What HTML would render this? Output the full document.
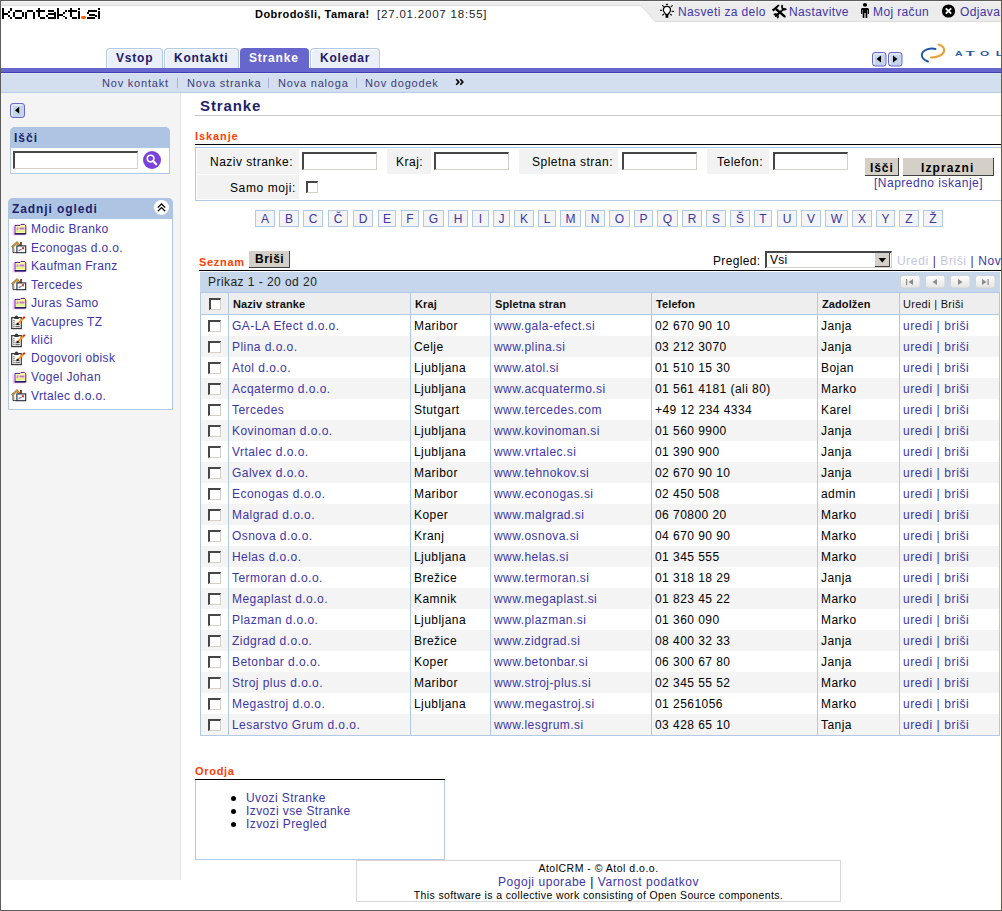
<!DOCTYPE html>
<html><head><meta charset="utf-8"><title>Stranke</title>
<style>
html,body{margin:0;padding:0;background:#fff;}
body{width:1002px;height:911px;position:relative;overflow:hidden;font-family:"Liberation Sans", sans-serif;}
.t{position:absolute;line-height:20px;white-space:nowrap;font-family:"Liberation Sans", sans-serif;}
svg{overflow:visible}
</style></head><body>
<div style="position:absolute;left:0px;top:0px;width:1002px;height:1px;background:#5c5c5c"></div>
<div style="position:absolute;left:1px;top:1px;width:1000px;height:1px;background:#f6f6f6"></div>
<div style="position:absolute;left:1px;top:2px;width:1000px;height:3px;background:#ececec"></div>
<div style="position:absolute;left:1px;top:5px;width:1000px;height:1px;background:#dcdcdc"></div>
<svg style="position:absolute;left:0;top:0" width="1002" height="30"><polygon points="641,5 1001,5 1001,21 655,21" fill="#ececec"/><polyline points="641,5.5 655,21.5 1001,21.5" fill="none" stroke="#dcdcdc" stroke-width="1"/></svg>
<svg style="position:absolute;left:0;top:0" width="110" height="25"><rect x="2" y="8" width="2" height="11" fill="#000"/><rect x="10" y="8" width="2" height="3" fill="#000"/><rect x="8" y="11" width="2" height="2" fill="#000"/><rect x="4" y="13" width="4" height="2" fill="#000"/><rect x="8" y="15" width="2" height="2" fill="#000"/><rect x="10" y="17" width="2" height="2" fill="#000"/><rect x="15" y="10" width="7" height="2" fill="#000"/><rect x="13" y="12" width="2" height="5" fill="#000"/><rect x="22" y="12" width="2" height="5" fill="#000"/><rect x="15" y="17" width="7" height="2" fill="#000"/><rect x="25" y="12" width="2" height="7" fill="#000"/><rect x="27" y="10" width="6" height="2" fill="#000"/><rect x="33" y="12" width="2" height="7" fill="#000"/><rect x="38" y="8" width="2" height="9" fill="#000"/><rect x="36" y="10" width="9" height="2" fill="#000"/><rect x="40" y="17" width="5" height="2" fill="#000"/><rect x="48" y="10" width="6" height="2" fill="#000"/><rect x="54" y="12" width="2" height="7" fill="#000"/><rect x="48" y="13" width="6" height="2" fill="#000"/><rect x="46" y="15" width="2" height="2" fill="#000"/><rect x="48" y="17" width="8" height="2" fill="#000"/><rect x="57" y="8" width="2" height="11" fill="#000"/><rect x="65" y="10" width="2" height="2" fill="#000"/><rect x="63" y="12" width="2" height="2" fill="#000"/><rect x="59" y="14" width="4" height="2" fill="#000"/><rect x="63" y="16" width="2" height="1" fill="#000"/><rect x="65" y="17" width="2" height="2" fill="#000"/><rect x="70" y="8" width="2" height="9" fill="#000"/><rect x="68" y="10" width="9" height="2" fill="#000"/><rect x="72" y="17" width="5" height="2" fill="#000"/><rect x="78" y="8" width="2" height="2" fill="#000"/><rect x="78" y="11" width="2" height="8" fill="#000"/><rect x="88" y="10" width="9" height="2" fill="#000"/><rect x="87" y="12" width="2" height="2" fill="#000"/><rect x="89" y="14" width="6" height="2" fill="#000"/><rect x="95" y="15" width="2" height="2" fill="#000"/><rect x="87" y="17" width="8" height="2" fill="#000"/><rect x="98" y="8" width="2" height="2" fill="#000"/><rect x="98" y="11" width="2" height="8" fill="#000"/><polygon points="82,16 85,16 86,17 86,18 85,19 82,19 81,18 81,17" fill="#ff6010"/></svg>
<div class="t" style="left:255px;top:4px;font-size:11px;font-weight:bold;color:#000;letter-spacing:0.45px;">Dobrodošli, Tamara!</div>
<div class="t" style="left:377px;top:4px;font-size:11.5px;font-weight:normal;color:#222;letter-spacing:0.8px;">[27.01.2007 18:55]</div>
<svg style="position:absolute;left:655px;top:2px" width="22" height="20" viewBox="0 0 22 20">
<g stroke="#000" stroke-width="1.1" stroke-linecap="butt">
<line x1="10.9" y1="2.4" x2="13" y2="2.4"/><line x1="7.2" y1="3.3" x2="8.8" y2="4.6"/><line x1="17.6" y1="3.4" x2="16" y2="4.7"/>
<line x1="5" y1="8.3" x2="7.2" y2="8.3"/><line x1="16.6" y1="9.4" x2="18.9" y2="9.4"/><line x1="7.3" y1="13.4" x2="8.9" y2="12"/><line x1="16.8" y1="13.4" x2="15.2" y2="12"/>
</g>
<path d="M11.9,4.3 C9.7,4.3 8.4,6 8.4,8 C8.4,9.8 10,11 10.7,12.3 L13.2,12.3 C13.9,11 15.5,9.8 15.5,8 C15.5,6 14.1,4.3 11.9,4.3 Z" fill="#fff" stroke="#000" stroke-width="1.25"/>
<rect x="10.6" y="12.2" width="2.7" height="3.6" fill="#000"/>
</svg>
<div class="t" style="left:678px;top:2px;font-size:12px;font-weight:normal;color:#3d35a8;letter-spacing:0.38px;">Nasveti za delo</div>
<svg style="position:absolute;left:765px;top:2px" width="35" height="20" viewBox="0 0 35 20">
<polygon points="7,7.8 13.2,2.6 14.6,3.6 9.6,8.6" fill="#000"/>
<polygon points="7,7.8 8.2,6.8 9.6,8.6 8.4,9.4" fill="#000"/>
<line x1="11.5" y1="7.5" x2="19.6" y2="14.4" stroke="#000" stroke-width="2.3" stroke-linecap="round"/>
<line x1="19" y1="6.8" x2="10.8" y2="14" stroke="#000" stroke-width="2" stroke-linecap="round"/>
<path d="M17.6,3.2 A2.3,2.3 0 1 0 21.3,6.6" fill="none" stroke="#000" stroke-width="1.7"/>
<path d="M12.3,16.2 A2.3,2.3 0 1 0 8.9,12.8" fill="none" stroke="#000" stroke-width="1.7"/>
</svg>
<div class="t" style="left:789px;top:2px;font-size:12px;font-weight:normal;color:#3d35a8;letter-spacing:0.38px;">Nastavitve</div>
<svg style="position:absolute;left:859px;top:2px" width="12" height="17" viewBox="0 0 12 17">
<ellipse cx="6" cy="2.9" rx="2.1" ry="1.8" fill="#000"/>
<path d="M3.3,6 L8.7,6 Q10,6 10,7.5 L10,12 L8.8,12 L8.8,8 L8.3,8 L8.3,16 L6.6,16 L6.6,11 L5.4,11 L5.4,16 L3.7,16 L3.7,8 L3.2,8 L3.2,12 L2,12 L2,7.5 Q2,6 3.3,6 Z" fill="#000"/>
</svg>
<div class="t" style="left:873px;top:2px;font-size:12px;font-weight:normal;color:#3d35a8;letter-spacing:0.38px;">Moj račun</div>
<svg style="position:absolute;left:941px;top:4px" width="15" height="15" viewBox="0 0 15 15">
<circle cx="7.5" cy="7" r="6.6" fill="#000"/>
<path d="M4.8,4.3 L10.2,9.7 M10.2,4.3 L4.8,9.7" stroke="#fff" stroke-width="1.8"/>
</svg>
<div class="t" style="left:960px;top:2px;font-size:12px;font-weight:normal;color:#3d35a8;letter-spacing:0.38px;">Odjava</div>
<div style="position:absolute;left:106px;top:48px;width:55px;height:19px;background:#eaeff8;border:1px solid #b2c9e6;border-bottom:none;border-radius:4px 4px 0 0;box-shadow:inset 1px 1px 0 #fff"></div>
<div class="t" style="left:116px;top:48px;font-size:12px;font-weight:bold;color:#1e1a6a;letter-spacing:0.8px;">Vstop</div>
<div style="position:absolute;left:164px;top:48px;width:73px;height:19px;background:#eaeff8;border:1px solid #b2c9e6;border-bottom:none;border-radius:4px 4px 0 0;box-shadow:inset 1px 1px 0 #fff"></div>
<div class="t" style="left:174px;top:48px;font-size:12px;font-weight:bold;color:#1e1a6a;letter-spacing:0.8px;">Kontakti</div>
<div style="position:absolute;left:240px;top:48px;width:69px;height:20px;background:#6666cc;border-radius:4px 4px 0 0"></div>
<div class="t" style="left:249px;top:48px;font-size:12px;font-weight:bold;color:#fff;letter-spacing:0.8px;">Stranke</div>
<div style="position:absolute;left:310px;top:48px;width:68px;height:19px;background:#eaeff8;border:1px solid #b2c9e6;border-bottom:none;border-radius:4px 4px 0 0;box-shadow:inset 1px 1px 0 #fff"></div>
<div class="t" style="left:320px;top:48px;font-size:12px;font-weight:bold;color:#1e1a6a;letter-spacing:0.8px;">Koledar</div>
<div style="position:absolute;left:1px;top:68px;width:1000px;height:4px;background:#6666cc"></div>
<div style="position:absolute;left:1px;top:72px;width:1000px;height:1px;background:#3d3db8"></div>
<div style="position:absolute;left:1px;top:73px;width:1000px;height:1px;background:#dde6f1"></div>
<div style="position:absolute;left:1px;top:74px;width:1000px;height:18px;background:#d3dfee"></div>
<div style="position:absolute;left:1px;top:92px;width:1000px;height:1px;background:#b9cde6"></div>
<svg style="position:absolute;left:872px;top:52px" width="15" height="15" viewBox="0 0 15 15"><rect x="0.5" y="0.5" width="13.5" height="13.5" rx="2.5" fill="#c4d4ea" stroke="#6a66d0"/><path d="M2,12 L2,3.5 Q2,2 3.5,2 L12,2" fill="none" stroke="#fff" stroke-width="1"/><path d="M9,3.5 L9,10.5 L4.5,7 Z" fill="#000"/></svg>
<svg style="position:absolute;left:888px;top:52px" width="15" height="15" viewBox="0 0 15 15"><rect x="0.5" y="0.5" width="13.5" height="13.5" rx="2.5" fill="#c4d4ea" stroke="#6a66d0"/><path d="M2,12 L2,3.5 Q2,2 3.5,2 L12,2" fill="none" stroke="#fff" stroke-width="1"/><path d="M5,3.5 L5,10.5 L9.5,7 Z" fill="#000"/></svg>
<svg style="position:absolute;left:918px;top:40px" width="84" height="26" viewBox="0 0 84 26">
<path d="M17.5,9 C13,7.5 4,9.5 3.8,15 C3.8,18 7,20.5 10,21.5" fill="none" stroke="#1f55a3" stroke-width="1.9" stroke-linecap="round"/>
<path d="M20.5,4.5 C24,5.5 26.5,8 26,11 C25.5,15 19,17.5 13,17.5" fill="none" stroke="#e6a23a" stroke-width="2.1" stroke-linecap="round"/>
<g fill="#2c5aa5" font-family="Liberation Sans" font-size="7.8" font-weight="bold"><text x="37" y="16.2" textLength="7.6" lengthAdjust="spacingAndGlyphs">A</text><text x="47.5" y="16.2" textLength="9.4" lengthAdjust="spacingAndGlyphs">T</text><text x="62" y="16.2" textLength="9.2" lengthAdjust="spacingAndGlyphs">O</text><text x="77.7" y="16.2" textLength="7.5" lengthAdjust="spacingAndGlyphs">L</text></g>
</svg>
<div class="t" style="left:102px;top:73px;font-size:11px;font-weight:normal;color:#3b3b7a;letter-spacing:0.8px;">Nov kontakt</div>
<div class="t" style="left:187px;top:73px;font-size:11px;font-weight:normal;color:#3b3b7a;letter-spacing:0.8px;">Nova stranka</div>
<div class="t" style="left:278px;top:73px;font-size:11px;font-weight:normal;color:#3b3b7a;letter-spacing:0.8px;">Nova naloga</div>
<div class="t" style="left:365px;top:73px;font-size:11px;font-weight:normal;color:#3b3b7a;letter-spacing:0.8px;">Nov dogodek</div>
<div style="position:absolute;left:177px;top:78px;width:1px;height:10px;background:#a8acdf"></div>
<div style="position:absolute;left:268px;top:78px;width:1px;height:10px;background:#a8acdf"></div>
<div style="position:absolute;left:356px;top:78px;width:1px;height:10px;background:#a8acdf"></div>
<svg style="position:absolute;left:450px;top:74px" width="20" height="16"><path d="M6.3,5.2 L8.8,8 L6.3,10.8 M10.3,5.2 L12.8,8 L10.3,10.8" fill="none" stroke="#000" stroke-width="1.7"/></svg>
<div style="position:absolute;left:1px;top:93px;width:179px;height:787px;background:#f4f4f4"></div>
<div style="position:absolute;left:180px;top:93px;width:1px;height:787px;background:#e2e2e2"></div>
<svg style="position:absolute;left:10px;top:103px" width="16" height="16" viewBox="0 0 16 16"><rect x="0.5" y="0.5" width="14" height="14" rx="2.5" fill="#c4d4ea" stroke="#6a66d0"/><path d="M2,12.5 L2,3.5 Q2,2 3.5,2 L12.5,2" fill="none" stroke="#fff" stroke-width="1"/><path d="M9.2,3.8 L9.2,10.8 L5,7.3 Z" fill="#000"/></svg>
<div style="position:absolute;left:10px;top:127px;width:160px;height:47px;background:#fff;border:1px solid #b2c9e6;border-radius:5px 5px 0 0;box-sizing:border-box"></div>
<div style="position:absolute;left:10px;top:127px;width:160px;height:21px;background:#adc5e3;border-radius:5px 5px 0 0"></div>
<div class="t" style="left:14px;top:128px;font-size:12px;font-weight:bold;color:#1f1f6b;letter-spacing:1.0px;">Išči</div>
<div style="position:absolute;left:13px;top:151px;width:125px;height:18px;background:#fff;border-top:2px solid #464646;border-left:2px solid #464646;border-right:1px solid #d4d0c8;border-bottom:1px solid #d4d0c8;box-sizing:border-box"></div>
<svg style="position:absolute;left:142px;top:150px" width="20" height="20" viewBox="0 0 20 20"><circle cx="10" cy="10" r="9" fill="#7a42dc"/><circle cx="8.6" cy="8.6" r="3.3" fill="none" stroke="#fff" stroke-width="1.6"/><line x1="11" y1="11" x2="14.2" y2="14.2" stroke="#fff" stroke-width="2.2" stroke-linecap="round"/></svg>
<div style="position:absolute;left:8px;top:198px;width:165px;height:212px;background:#fff;border:1px solid #b2c9e6;border-radius:5px 5px 0 0;box-sizing:border-box"></div>
<div style="position:absolute;left:8px;top:198px;width:165px;height:21px;background:#adc5e3;border-radius:5px 5px 0 0"></div>
<div class="t" style="left:12px;top:199px;font-size:12px;font-weight:bold;color:#1f1f6b;letter-spacing:0.9px;">Zadnji ogledi</div>
<svg style="position:absolute;left:153px;top:199px" width="17" height="17" viewBox="0 0 17 17"><circle cx="8.5" cy="8.5" r="7.5" fill="#fff"/><path d="M4.8,8.6 L8.5,5 L12.2,8.6 M4.8,12.2 L8.5,8.6 L12.2,12.2" fill="none" stroke="#000" stroke-width="1.3"/></svg>
<svg style="position:absolute;left:11px;top:223px" width="16" height="13" viewBox="0 0 16 13"><rect x="1.5" y="3.5" width="12" height="9" fill="#f9c9f0"/><path d="M4,2.4 L9,2.4 L10,1.4 L13.5,1.4 L14.8,2.6 L14.8,10.8 L4,10.8 Z" fill="#ffff9a" stroke="#5a10a0" stroke-width="1"/><rect x="3.5" y="10.2" width="11.6" height="1.3" fill="#101060"/><rect x="5.5" y="4" width="2" height="1.3" fill="#9cd"/><rect x="5.5" y="5.5" width="2" height="1.2" fill="#d050c0"/><rect x="8.5" y="4.5" width="5" height="2" fill="#c070e0"/><rect x="5" y="7.5" width="8.5" height="1.2" fill="#c8f090"/><rect x="3.2" y="3" width="1" height="7.5" fill="#c090f0"/></svg>
<div class="t" style="left:31px;top:219px;font-size:12px;font-weight:normal;color:#3d35a8;letter-spacing:0.35px;">Modic Branko</div>
<svg style="position:absolute;left:11px;top:241px" width="16" height="13" viewBox="0 0 16 13"><rect x="9.2" y="1" width="1.6" height="3.8" fill="#6a1a10"/><path d="M1,6.3 L6,1.6 L8.8,4.6" fill="none" stroke="#3a3a3a" stroke-width="2"/><path d="M1,6.3 L6,1.6 L8.8,4.6" fill="none" stroke="#f0b020" stroke-width="1.1"/><path d="M2,6.3 L2,11.6 L6,11.6" fill="none" stroke="#2a3040" stroke-width="1"/><rect x="3.3" y="7.5" width="0.8" height="3.8" fill="#d8c8a0"/><rect x="5.9" y="4.9" width="8.8" height="6.8" fill="#f4f8ff" stroke="#1f2838" stroke-width="1.1"/><rect x="11" y="6.2" width="2" height="2" fill="#e83010"/><path d="M7.6,9.6 L10.6,8.3" stroke="#7080a0" stroke-width="1.2"/></svg>
<div class="t" style="left:31px;top:238px;font-size:12px;font-weight:normal;color:#3d35a8;letter-spacing:0.35px;">Econogas d.o.o.</div>
<svg style="position:absolute;left:11px;top:260px" width="16" height="13" viewBox="0 0 16 13"><rect x="1.5" y="3.5" width="12" height="9" fill="#f9c9f0"/><path d="M4,2.4 L9,2.4 L10,1.4 L13.5,1.4 L14.8,2.6 L14.8,10.8 L4,10.8 Z" fill="#ffff9a" stroke="#5a10a0" stroke-width="1"/><rect x="3.5" y="10.2" width="11.6" height="1.3" fill="#101060"/><rect x="5.5" y="4" width="2" height="1.3" fill="#9cd"/><rect x="5.5" y="5.5" width="2" height="1.2" fill="#d050c0"/><rect x="8.5" y="4.5" width="5" height="2" fill="#c070e0"/><rect x="5" y="7.5" width="8.5" height="1.2" fill="#c8f090"/><rect x="3.2" y="3" width="1" height="7.5" fill="#c090f0"/></svg>
<div class="t" style="left:31px;top:256px;font-size:12px;font-weight:normal;color:#3d35a8;letter-spacing:0.35px;">Kaufman Franz</div>
<svg style="position:absolute;left:11px;top:278px" width="16" height="13" viewBox="0 0 16 13"><rect x="9.2" y="1" width="1.6" height="3.8" fill="#6a1a10"/><path d="M1,6.3 L6,1.6 L8.8,4.6" fill="none" stroke="#3a3a3a" stroke-width="2"/><path d="M1,6.3 L6,1.6 L8.8,4.6" fill="none" stroke="#f0b020" stroke-width="1.1"/><path d="M2,6.3 L2,11.6 L6,11.6" fill="none" stroke="#2a3040" stroke-width="1"/><rect x="3.3" y="7.5" width="0.8" height="3.8" fill="#d8c8a0"/><rect x="5.9" y="4.9" width="8.8" height="6.8" fill="#f4f8ff" stroke="#1f2838" stroke-width="1.1"/><rect x="11" y="6.2" width="2" height="2" fill="#e83010"/><path d="M7.6,9.6 L10.6,8.3" stroke="#7080a0" stroke-width="1.2"/></svg>
<div class="t" style="left:31px;top:275px;font-size:12px;font-weight:normal;color:#3d35a8;letter-spacing:0.35px;">Tercedes</div>
<svg style="position:absolute;left:11px;top:297px" width="16" height="13" viewBox="0 0 16 13"><rect x="1.5" y="3.5" width="12" height="9" fill="#f9c9f0"/><path d="M4,2.4 L9,2.4 L10,1.4 L13.5,1.4 L14.8,2.6 L14.8,10.8 L4,10.8 Z" fill="#ffff9a" stroke="#5a10a0" stroke-width="1"/><rect x="3.5" y="10.2" width="11.6" height="1.3" fill="#101060"/><rect x="5.5" y="4" width="2" height="1.3" fill="#9cd"/><rect x="5.5" y="5.5" width="2" height="1.2" fill="#d050c0"/><rect x="8.5" y="4.5" width="5" height="2" fill="#c070e0"/><rect x="5" y="7.5" width="8.5" height="1.2" fill="#c8f090"/><rect x="3.2" y="3" width="1" height="7.5" fill="#c090f0"/></svg>
<div class="t" style="left:31px;top:293px;font-size:12px;font-weight:normal;color:#3d35a8;letter-spacing:0.35px;">Juras Samo</div>
<svg style="position:absolute;left:10px;top:314px" width="16" height="16" viewBox="0 0 16 16"><rect x="1.7" y="3.6" width="9.6" height="11" fill="#fff" stroke="#383838" stroke-width="1.2"/><path d="M4.2,5 C4.4,2.6 5.4,1.4 6.5,1.4 C7.6,1.4 8.6,2.6 8.8,5 Z" fill="#383838"/><g fill="#383838"><rect x="3.4" y="6.2" width="1.1" height="1.1"/><rect x="3.4" y="8.2" width="1.1" height="1.1"/><rect x="3.4" y="10.2" width="1.1" height="1.1"/><rect x="5.4" y="10.3" width="4.4" height="0.9"/><rect x="3.4" y="12.2" width="1.1" height="1.1"/><rect x="5.4" y="12.3" width="4.4" height="0.9"/></g><line x1="8" y1="9.6" x2="13.6" y2="4" stroke="#ff8c14" stroke-width="1.9"/><line x1="13.2" y1="4.4" x2="14.8" y2="2.8" stroke="#d42a10" stroke-width="2"/><circle cx="7.6" cy="9.9" r="1.1" fill="#000"/></svg>
<div class="t" style="left:31px;top:312px;font-size:12px;font-weight:normal;color:#3d35a8;letter-spacing:0.35px;">Vacupres TZ</div>
<svg style="position:absolute;left:10px;top:332px" width="16" height="16" viewBox="0 0 16 16"><rect x="1.7" y="3.6" width="9.6" height="11" fill="#fff" stroke="#383838" stroke-width="1.2"/><path d="M4.2,5 C4.4,2.6 5.4,1.4 6.5,1.4 C7.6,1.4 8.6,2.6 8.8,5 Z" fill="#383838"/><g fill="#383838"><rect x="3.4" y="6.2" width="1.1" height="1.1"/><rect x="3.4" y="8.2" width="1.1" height="1.1"/><rect x="3.4" y="10.2" width="1.1" height="1.1"/><rect x="5.4" y="10.3" width="4.4" height="0.9"/><rect x="3.4" y="12.2" width="1.1" height="1.1"/><rect x="5.4" y="12.3" width="4.4" height="0.9"/></g><line x1="8" y1="9.6" x2="13.6" y2="4" stroke="#ff8c14" stroke-width="1.9"/><line x1="13.2" y1="4.4" x2="14.8" y2="2.8" stroke="#d42a10" stroke-width="2"/><circle cx="7.6" cy="9.9" r="1.1" fill="#000"/></svg>
<div class="t" style="left:31px;top:330px;font-size:12px;font-weight:normal;color:#3d35a8;letter-spacing:0.35px;">kliči</div>
<svg style="position:absolute;left:10px;top:350px" width="16" height="16" viewBox="0 0 16 16"><rect x="1.7" y="3.6" width="9.6" height="11" fill="#fff" stroke="#383838" stroke-width="1.2"/><path d="M4.2,5 C4.4,2.6 5.4,1.4 6.5,1.4 C7.6,1.4 8.6,2.6 8.8,5 Z" fill="#383838"/><g fill="#383838"><rect x="3.4" y="6.2" width="1.1" height="1.1"/><rect x="3.4" y="8.2" width="1.1" height="1.1"/><rect x="3.4" y="10.2" width="1.1" height="1.1"/><rect x="5.4" y="10.3" width="4.4" height="0.9"/><rect x="3.4" y="12.2" width="1.1" height="1.1"/><rect x="5.4" y="12.3" width="4.4" height="0.9"/></g><line x1="8" y1="9.6" x2="13.6" y2="4" stroke="#ff8c14" stroke-width="1.9"/><line x1="13.2" y1="4.4" x2="14.8" y2="2.8" stroke="#d42a10" stroke-width="2"/><circle cx="7.6" cy="9.9" r="1.1" fill="#000"/></svg>
<div class="t" style="left:31px;top:348px;font-size:12px;font-weight:normal;color:#3d35a8;letter-spacing:0.35px;">Dogovori obisk</div>
<svg style="position:absolute;left:11px;top:371px" width="16" height="13" viewBox="0 0 16 13"><rect x="1.5" y="3.5" width="12" height="9" fill="#f9c9f0"/><path d="M4,2.4 L9,2.4 L10,1.4 L13.5,1.4 L14.8,2.6 L14.8,10.8 L4,10.8 Z" fill="#ffff9a" stroke="#5a10a0" stroke-width="1"/><rect x="3.5" y="10.2" width="11.6" height="1.3" fill="#101060"/><rect x="5.5" y="4" width="2" height="1.3" fill="#9cd"/><rect x="5.5" y="5.5" width="2" height="1.2" fill="#d050c0"/><rect x="8.5" y="4.5" width="5" height="2" fill="#c070e0"/><rect x="5" y="7.5" width="8.5" height="1.2" fill="#c8f090"/><rect x="3.2" y="3" width="1" height="7.5" fill="#c090f0"/></svg>
<div class="t" style="left:31px;top:367px;font-size:12px;font-weight:normal;color:#3d35a8;letter-spacing:0.35px;">Vogel Johan</div>
<svg style="position:absolute;left:11px;top:389px" width="16" height="13" viewBox="0 0 16 13"><rect x="9.2" y="1" width="1.6" height="3.8" fill="#6a1a10"/><path d="M1,6.3 L6,1.6 L8.8,4.6" fill="none" stroke="#3a3a3a" stroke-width="2"/><path d="M1,6.3 L6,1.6 L8.8,4.6" fill="none" stroke="#f0b020" stroke-width="1.1"/><path d="M2,6.3 L2,11.6 L6,11.6" fill="none" stroke="#2a3040" stroke-width="1"/><rect x="3.3" y="7.5" width="0.8" height="3.8" fill="#d8c8a0"/><rect x="5.9" y="4.9" width="8.8" height="6.8" fill="#f4f8ff" stroke="#1f2838" stroke-width="1.1"/><rect x="11" y="6.2" width="2" height="2" fill="#e83010"/><path d="M7.6,9.6 L10.6,8.3" stroke="#7080a0" stroke-width="1.2"/></svg>
<div class="t" style="left:31px;top:386px;font-size:12px;font-weight:normal;color:#3d35a8;letter-spacing:0.35px;">Vrtalec d.o.o.</div>
<div class="t" style="left:200px;top:96px;font-size:15px;font-weight:bold;color:#1f1f6b;letter-spacing:0.9px;">Stranke</div>
<div style="position:absolute;left:195px;top:115px;width:806px;height:1px;background:#c8c8c8"></div>
<div class="t" style="left:195px;top:126px;font-size:11px;font-weight:bold;color:#ff4000;letter-spacing:0.9px;">Iskanje</div>
<div style="position:absolute;left:195px;top:144px;width:806px;height:1px;background:#000"></div>
<div style="position:absolute;left:195px;top:147px;width:806px;height:54px;border:1px solid #b2c9e6;border-right:none;box-sizing:border-box"></div>
<div style="position:absolute;left:197px;top:149px;width:102px;height:25px;background:#f2f2f2"></div>
<div style="position:absolute;left:197px;top:175px;width:102px;height:24px;background:#f2f2f2"></div>
<div style="position:absolute;left:387px;top:149px;width:44px;height:25px;background:#f2f2f2"></div>
<div style="position:absolute;left:519px;top:149px;width:99px;height:25px;background:#f2f2f2"></div>
<div style="position:absolute;left:707px;top:149px;width:62px;height:25px;background:#f2f2f2"></div>
<div class="t" style="left:210px;top:152px;font-size:12px;font-weight:normal;color:#000;letter-spacing:0.5px;">Naziv stranke:</div>
<div class="t" style="left:230px;top:178px;font-size:12px;font-weight:normal;color:#000;letter-spacing:0.6px;">Samo moji:</div>
<div class="t" style="left:396px;top:152px;font-size:12px;font-weight:normal;color:#000;letter-spacing:0.5px;">Kraj:</div>
<div class="t" style="left:532px;top:152px;font-size:12px;font-weight:normal;color:#000;letter-spacing:0.5px;">Spletna stran:</div>
<div class="t" style="left:717px;top:152px;font-size:12px;font-weight:normal;color:#000;letter-spacing:0.5px;">Telefon:</div>
<div style="position:absolute;left:302px;top:152px;width:75px;height:18px;background:#fff;border-top:2px solid #464646;border-left:2px solid #464646;border-right:1px solid #d4d0c8;border-bottom:1px solid #d4d0c8;box-sizing:border-box"></div>
<div style="position:absolute;left:434px;top:152px;width:75px;height:18px;background:#fff;border-top:2px solid #464646;border-left:2px solid #464646;border-right:1px solid #d4d0c8;border-bottom:1px solid #d4d0c8;box-sizing:border-box"></div>
<div style="position:absolute;left:622px;top:152px;width:75px;height:18px;background:#fff;border-top:2px solid #464646;border-left:2px solid #464646;border-right:1px solid #d4d0c8;border-bottom:1px solid #d4d0c8;box-sizing:border-box"></div>
<div style="position:absolute;left:773px;top:152px;width:75px;height:18px;background:#fff;border-top:2px solid #464646;border-left:2px solid #464646;border-right:1px solid #d4d0c8;border-bottom:1px solid #d4d0c8;box-sizing:border-box"></div>
<div style="position:absolute;left:306px;top:181px;width:12px;height:12px;background:#fff;border-top:2px solid #464646;border-left:2px solid #464646;border-right:1px solid #d4d0c8;border-bottom:1px solid #d4d0c8;box-sizing:border-box"></div>
<div style="position:absolute;left:865px;top:158px;width:34px;height:18px;background:#d4d0c8;border-right:1px solid #404040;border-bottom:1px solid #404040;box-sizing:border-box"></div>
<div class="t" style="left:870px;top:158px;font-size:12px;font-weight:bold;color:#000;letter-spacing:0.9px;">Išči</div>
<div style="position:absolute;left:903px;top:158px;width:91px;height:18px;background:#d4d0c8;border-right:1px solid #404040;border-bottom:1px solid #404040;box-sizing:border-box"></div>
<div class="t" style="left:921px;top:158px;font-size:12px;font-weight:bold;color:#000;letter-spacing:1.1px;">Izprazni</div>
<div class="t" style="left:874px;top:173px;font-size:12px;font-weight:normal;color:#3d35a8;letter-spacing:0.5px;">[Napredno iskanje]</div>
<div class="t" style="left:255px;top:210px;width:18px;height:15px;border:1px solid #b2c9e6;background:#f4f4f4;text-align:center;line-height:16px;font-size:12px;color:#3d35a8">A</div>
<div class="t" style="left:279px;top:210px;width:18px;height:15px;border:1px solid #b2c9e6;background:#f4f4f4;text-align:center;line-height:16px;font-size:12px;color:#3d35a8">B</div>
<div class="t" style="left:303px;top:210px;width:18px;height:15px;border:1px solid #b2c9e6;background:#f4f4f4;text-align:center;line-height:16px;font-size:12px;color:#3d35a8">C</div>
<div class="t" style="left:328px;top:210px;width:18px;height:15px;border:1px solid #b2c9e6;background:#f4f4f4;text-align:center;line-height:16px;font-size:12px;color:#3d35a8">Č</div>
<div class="t" style="left:353px;top:210px;width:18px;height:15px;border:1px solid #b2c9e6;background:#f4f4f4;text-align:center;line-height:16px;font-size:12px;color:#3d35a8">D</div>
<div class="t" style="left:378px;top:210px;width:16px;height:15px;border:1px solid #b2c9e6;background:#f4f4f4;text-align:center;line-height:16px;font-size:12px;color:#3d35a8">E</div>
<div class="t" style="left:401px;top:210px;width:16px;height:15px;border:1px solid #b2c9e6;background:#f4f4f4;text-align:center;line-height:16px;font-size:12px;color:#3d35a8">F</div>
<div class="t" style="left:423px;top:210px;width:19px;height:15px;border:1px solid #b2c9e6;background:#f4f4f4;text-align:center;line-height:16px;font-size:12px;color:#3d35a8">G</div>
<div class="t" style="left:448px;top:210px;width:18px;height:15px;border:1px solid #b2c9e6;background:#f4f4f4;text-align:center;line-height:16px;font-size:12px;color:#3d35a8">H</div>
<div class="t" style="left:472px;top:210px;width:15px;height:15px;border:1px solid #b2c9e6;background:#f4f4f4;text-align:center;line-height:16px;font-size:12px;color:#3d35a8">I</div>
<div class="t" style="left:493px;top:210px;width:15px;height:15px;border:1px solid #b2c9e6;background:#f4f4f4;text-align:center;line-height:16px;font-size:12px;color:#3d35a8">J</div>
<div class="t" style="left:514px;top:210px;width:18px;height:15px;border:1px solid #b2c9e6;background:#f4f4f4;text-align:center;line-height:16px;font-size:12px;color:#3d35a8">K</div>
<div class="t" style="left:538px;top:210px;width:16px;height:15px;border:1px solid #b2c9e6;background:#f4f4f4;text-align:center;line-height:16px;font-size:12px;color:#3d35a8">L</div>
<div class="t" style="left:560px;top:210px;width:19px;height:15px;border:1px solid #b2c9e6;background:#f4f4f4;text-align:center;line-height:16px;font-size:12px;color:#3d35a8">M</div>
<div class="t" style="left:585px;top:210px;width:18px;height:15px;border:1px solid #b2c9e6;background:#f4f4f4;text-align:center;line-height:16px;font-size:12px;color:#3d35a8">N</div>
<div class="t" style="left:609px;top:210px;width:19px;height:15px;border:1px solid #b2c9e6;background:#f4f4f4;text-align:center;line-height:16px;font-size:12px;color:#3d35a8">O</div>
<div class="t" style="left:634px;top:210px;width:17px;height:15px;border:1px solid #b2c9e6;background:#f4f4f4;text-align:center;line-height:16px;font-size:12px;color:#3d35a8">P</div>
<div class="t" style="left:657px;top:210px;width:19px;height:15px;border:1px solid #b2c9e6;background:#f4f4f4;text-align:center;line-height:16px;font-size:12px;color:#3d35a8">Q</div>
<div class="t" style="left:682px;top:210px;width:18px;height:15px;border:1px solid #b2c9e6;background:#f4f4f4;text-align:center;line-height:16px;font-size:12px;color:#3d35a8">R</div>
<div class="t" style="left:706px;top:210px;width:18px;height:15px;border:1px solid #b2c9e6;background:#f4f4f4;text-align:center;line-height:16px;font-size:12px;color:#3d35a8">S</div>
<div class="t" style="left:730px;top:210px;width:18px;height:15px;border:1px solid #b2c9e6;background:#f4f4f4;text-align:center;line-height:16px;font-size:12px;color:#3d35a8">Š</div>
<div class="t" style="left:754px;top:210px;width:16px;height:15px;border:1px solid #b2c9e6;background:#f4f4f4;text-align:center;line-height:16px;font-size:12px;color:#3d35a8">T</div>
<div class="t" style="left:777px;top:210px;width:18px;height:15px;border:1px solid #b2c9e6;background:#f4f4f4;text-align:center;line-height:16px;font-size:12px;color:#3d35a8">U</div>
<div class="t" style="left:801px;top:210px;width:18px;height:15px;border:1px solid #b2c9e6;background:#f4f4f4;text-align:center;line-height:16px;font-size:12px;color:#3d35a8">V</div>
<div class="t" style="left:825px;top:210px;width:21px;height:15px;border:1px solid #b2c9e6;background:#f4f4f4;text-align:center;line-height:16px;font-size:12px;color:#3d35a8">W</div>
<div class="t" style="left:852px;top:210px;width:18px;height:15px;border:1px solid #b2c9e6;background:#f4f4f4;text-align:center;line-height:16px;font-size:12px;color:#3d35a8">X</div>
<div class="t" style="left:876px;top:210px;width:17px;height:15px;border:1px solid #b2c9e6;background:#f4f4f4;text-align:center;line-height:16px;font-size:12px;color:#3d35a8">Y</div>
<div class="t" style="left:899px;top:210px;width:18px;height:15px;border:1px solid #b2c9e6;background:#f4f4f4;text-align:center;line-height:16px;font-size:12px;color:#3d35a8">Z</div>
<div class="t" style="left:923px;top:210px;width:18px;height:15px;border:1px solid #b2c9e6;background:#f4f4f4;text-align:center;line-height:16px;font-size:12px;color:#3d35a8">Ž</div>
<div class="t" style="left:199px;top:252px;font-size:11px;font-weight:bold;color:#ff4000;letter-spacing:0.7px;">Seznam</div>
<div style="position:absolute;left:249px;top:251px;width:41px;height:17px;background:#d4d0c8;border-right:1px solid #404040;border-bottom:1px solid #404040;box-sizing:border-box"></div>
<div class="t" style="left:255px;top:249px;font-size:12px;font-weight:bold;color:#000;letter-spacing:0.5px;">Briši</div>
<div class="t" style="left:713px;top:251px;font-size:12px;font-weight:normal;color:#000;letter-spacing:0.35px;">Pregled:</div>
<div style="position:absolute;left:765px;top:251px;width:127px;height:17px;background:#fff;border-top:2px solid #464646;border-left:2px solid #464646;border-right:1px solid #d4d0c8;border-bottom:1px solid #d4d0c8;box-sizing:border-box"></div>
<div class="t" style="left:770px;top:250px;font-size:12px;font-weight:normal;color:#000;letter-spacing:0.3px;">Vsi</div>
<div style="position:absolute;left:875px;top:253px;width:15px;height:14px;background:#d4d0c8;border-right:1px solid #404040;border-bottom:1px solid #404040;box-sizing:border-box"></div>
<svg style="position:absolute;left:875px;top:253px" width="15" height="14"><path d="M3.5,5 L11,5 L7.25,9.5 Z" fill="#000"/></svg>
<div class="t" style="left:897px;top:251px;font-size:12px;letter-spacing:0.6px;white-space:nowrap"><span style="color:#c4c4dc">Uredi</span> <span style="color:#4a2a88">|</span> <span style="color:#c4c4dc">Briši</span> <span style="color:#4a2a88">|</span> <span style="color:#3d35a8">Nov</span></div>
<div style="position:absolute;left:199px;top:270px;width:802px;height:1px;background:#000"></div>
<div style="position:absolute;left:200px;top:272px;width:800px;height:20px;background:#c7d7eb"></div>
<div class="t" style="left:208px;top:272px;font-size:12px;font-weight:normal;color:#222;letter-spacing:0.45px;">Prikaz 1 - 20 od 20</div>
<svg style="position:absolute;left:900px;top:275px" width="21" height="14"><defs><linearGradient id="pg900" x1="0" y1="0" x2="0" y2="1"><stop offset="0" stop-color="#ffffff"/><stop offset="1" stop-color="#e4e4e4"/></linearGradient></defs><rect x="0.5" y="0.5" width="19.5" height="12.5" rx="2.5" fill="url(#pg900)" stroke="#d2d2d2"/><rect x="6" y="4" width="1.2" height="6" fill="#8a8a8a"/><path d="M13,4 L13,10 L8.5,7 Z" fill="#8a8a8a"/></svg>
<svg style="position:absolute;left:925px;top:275px" width="21" height="14"><defs><linearGradient id="pg925" x1="0" y1="0" x2="0" y2="1"><stop offset="0" stop-color="#ffffff"/><stop offset="1" stop-color="#e4e4e4"/></linearGradient></defs><rect x="0.5" y="0.5" width="19.5" height="12.5" rx="2.5" fill="url(#pg925)" stroke="#d2d2d2"/><path d="M12,4 L12,10 L7.5,7 Z" fill="#8a8a8a"/></svg>
<svg style="position:absolute;left:950px;top:275px" width="21" height="14"><defs><linearGradient id="pg950" x1="0" y1="0" x2="0" y2="1"><stop offset="0" stop-color="#ffffff"/><stop offset="1" stop-color="#e4e4e4"/></linearGradient></defs><rect x="0.5" y="0.5" width="19.5" height="12.5" rx="2.5" fill="url(#pg950)" stroke="#d2d2d2"/><path d="M8,4 L8,10 L12.5,7 Z" fill="#8a8a8a"/></svg>
<svg style="position:absolute;left:975px;top:275px" width="21" height="14"><defs><linearGradient id="pg975" x1="0" y1="0" x2="0" y2="1"><stop offset="0" stop-color="#ffffff"/><stop offset="1" stop-color="#e4e4e4"/></linearGradient></defs><rect x="0.5" y="0.5" width="19.5" height="12.5" rx="2.5" fill="url(#pg975)" stroke="#d2d2d2"/><path d="M7,4 L7,10 L11.5,7 Z" fill="#8a8a8a"/><rect x="12.5" y="4" width="1.2" height="6" fill="#8a8a8a"/></svg>
<div style="position:absolute;left:200px;top:292px;width:800px;height:1px;background:#b2c9e6"></div>
<div style="position:absolute;left:201px;top:293px;width:798px;height:21px;background:#eeeeee"></div>
<div style="position:absolute;left:200px;top:314px;width:800px;height:1px;background:#b2c9e6"></div>
<div style="position:absolute;left:201px;top:336px;width:798px;height:21px;background:#f4f4f4"></div>
<div style="position:absolute;left:201px;top:378px;width:798px;height:21px;background:#f4f4f4"></div>
<div style="position:absolute;left:201px;top:420px;width:798px;height:21px;background:#f4f4f4"></div>
<div style="position:absolute;left:201px;top:462px;width:798px;height:21px;background:#f4f4f4"></div>
<div style="position:absolute;left:201px;top:504px;width:798px;height:21px;background:#f4f4f4"></div>
<div style="position:absolute;left:201px;top:546px;width:798px;height:21px;background:#f4f4f4"></div>
<div style="position:absolute;left:201px;top:588px;width:798px;height:21px;background:#f4f4f4"></div>
<div style="position:absolute;left:201px;top:630px;width:798px;height:21px;background:#f4f4f4"></div>
<div style="position:absolute;left:201px;top:672px;width:798px;height:21px;background:#f4f4f4"></div>
<div style="position:absolute;left:201px;top:714px;width:798px;height:21px;background:#f4f4f4"></div>
<div style="position:absolute;left:200px;top:292px;width:1px;height:443px;background:#b2c9e6"></div>
<div style="position:absolute;left:228px;top:292px;width:1px;height:443px;background:#b2c9e6"></div>
<div style="position:absolute;left:410px;top:292px;width:1px;height:443px;background:#b2c9e6"></div>
<div style="position:absolute;left:490px;top:292px;width:1px;height:443px;background:#b2c9e6"></div>
<div style="position:absolute;left:651px;top:292px;width:1px;height:443px;background:#b2c9e6"></div>
<div style="position:absolute;left:817px;top:292px;width:1px;height:443px;background:#b2c9e6"></div>
<div style="position:absolute;left:899px;top:292px;width:1px;height:443px;background:#b2c9e6"></div>
<div style="position:absolute;left:999px;top:292px;width:1px;height:443px;background:#b2c9e6"></div>
<div style="position:absolute;left:200px;top:735px;width:800px;height:1px;background:#b2c9e6"></div>
<div style="position:absolute;left:209px;top:298px;width:12px;height:12px;background:#fff;border-top:2px solid #464646;border-left:2px solid #464646;border-right:1px solid #d4d0c8;border-bottom:1px solid #d4d0c8;box-sizing:border-box"></div>
<div class="t" style="left:233px;top:294px;font-size:11px;font-weight:bold;color:#111;letter-spacing:0.1px;">Naziv stranke</div>
<div class="t" style="left:415px;top:294px;font-size:11px;font-weight:bold;color:#111;letter-spacing:0.1px;">Kraj</div>
<div class="t" style="left:495px;top:294px;font-size:11px;font-weight:bold;color:#111;letter-spacing:0.1px;">Spletna stran</div>
<div class="t" style="left:656px;top:294px;font-size:11px;font-weight:bold;color:#111;letter-spacing:0.1px;">Telefon</div>
<div class="t" style="left:822px;top:294px;font-size:11px;font-weight:bold;color:#111;letter-spacing:0.1px;">Zadolžen</div>
<div class="t" style="left:903px;top:294px;font-size:11px;letter-spacing:0.3px;white-space:nowrap;color:#111">Uredi | Briši</div>
<div style="position:absolute;left:208px;top:320px;width:13px;height:12px;background:#fff;border-top:2px solid #464646;border-left:2px solid #464646;border-right:1px solid #d4d0c8;border-bottom:1px solid #d4d0c8;box-sizing:border-box"></div>
<div class="t" style="left:232px;top:316px;font-size:12px;font-weight:normal;color:#3d35a8;letter-spacing:0.45px;">GA-LA Efect d.o.o.</div>
<div class="t" style="left:414px;top:316px;font-size:12px;font-weight:normal;color:#000;letter-spacing:0.45px;">Maribor</div>
<div class="t" style="left:494px;top:316px;font-size:12px;font-weight:normal;color:#3d35a8;letter-spacing:0.45px;">www.gala-efect.si</div>
<div class="t" style="left:655px;top:316px;font-size:12px;font-weight:normal;color:#000;letter-spacing:0.45px;">02 670 90 10</div>
<div class="t" style="left:821px;top:316px;font-size:12px;font-weight:normal;color:#000;letter-spacing:0.45px;">Janja</div>
<div class="t" style="left:903px;top:316px;font-size:12px;letter-spacing:0.6px;color:#3d35a8;white-space:nowrap">uredi | briši</div>
<div style="position:absolute;left:208px;top:341px;width:13px;height:12px;background:#fff;border-top:2px solid #464646;border-left:2px solid #464646;border-right:1px solid #d4d0c8;border-bottom:1px solid #d4d0c8;box-sizing:border-box"></div>
<div class="t" style="left:232px;top:337px;font-size:12px;font-weight:normal;color:#3d35a8;letter-spacing:0.45px;">Plina d.o.o.</div>
<div class="t" style="left:414px;top:337px;font-size:12px;font-weight:normal;color:#000;letter-spacing:0.45px;">Celje</div>
<div class="t" style="left:494px;top:337px;font-size:12px;font-weight:normal;color:#3d35a8;letter-spacing:0.45px;">www.plina.si</div>
<div class="t" style="left:655px;top:337px;font-size:12px;font-weight:normal;color:#000;letter-spacing:0.45px;">03 212 3070</div>
<div class="t" style="left:821px;top:337px;font-size:12px;font-weight:normal;color:#000;letter-spacing:0.45px;">Janja</div>
<div class="t" style="left:903px;top:337px;font-size:12px;letter-spacing:0.6px;color:#3d35a8;white-space:nowrap">uredi | briši</div>
<div style="position:absolute;left:208px;top:362px;width:13px;height:12px;background:#fff;border-top:2px solid #464646;border-left:2px solid #464646;border-right:1px solid #d4d0c8;border-bottom:1px solid #d4d0c8;box-sizing:border-box"></div>
<div class="t" style="left:232px;top:358px;font-size:12px;font-weight:normal;color:#3d35a8;letter-spacing:0.45px;">Atol d.o.o.</div>
<div class="t" style="left:414px;top:358px;font-size:12px;font-weight:normal;color:#000;letter-spacing:0.45px;">Ljubljana</div>
<div class="t" style="left:494px;top:358px;font-size:12px;font-weight:normal;color:#3d35a8;letter-spacing:0.45px;">www.atol.si</div>
<div class="t" style="left:655px;top:358px;font-size:12px;font-weight:normal;color:#000;letter-spacing:0.45px;">01 510 15 30</div>
<div class="t" style="left:821px;top:358px;font-size:12px;font-weight:normal;color:#000;letter-spacing:0.45px;">Bojan</div>
<div class="t" style="left:903px;top:358px;font-size:12px;letter-spacing:0.6px;color:#3d35a8;white-space:nowrap">uredi | briši</div>
<div style="position:absolute;left:208px;top:383px;width:13px;height:12px;background:#fff;border-top:2px solid #464646;border-left:2px solid #464646;border-right:1px solid #d4d0c8;border-bottom:1px solid #d4d0c8;box-sizing:border-box"></div>
<div class="t" style="left:232px;top:379px;font-size:12px;font-weight:normal;color:#3d35a8;letter-spacing:0.45px;">Acqatermo d.o.o.</div>
<div class="t" style="left:414px;top:379px;font-size:12px;font-weight:normal;color:#000;letter-spacing:0.45px;">Ljubljana</div>
<div class="t" style="left:494px;top:379px;font-size:12px;font-weight:normal;color:#3d35a8;letter-spacing:0.45px;">www.acquatermo.si</div>
<div class="t" style="left:655px;top:379px;font-size:12px;font-weight:normal;color:#000;letter-spacing:0.45px;">01 561 4181 (ali 80)</div>
<div class="t" style="left:821px;top:379px;font-size:12px;font-weight:normal;color:#000;letter-spacing:0.45px;">Marko</div>
<div class="t" style="left:903px;top:379px;font-size:12px;letter-spacing:0.6px;color:#3d35a8;white-space:nowrap">uredi | briši</div>
<div style="position:absolute;left:208px;top:404px;width:13px;height:12px;background:#fff;border-top:2px solid #464646;border-left:2px solid #464646;border-right:1px solid #d4d0c8;border-bottom:1px solid #d4d0c8;box-sizing:border-box"></div>
<div class="t" style="left:232px;top:400px;font-size:12px;font-weight:normal;color:#3d35a8;letter-spacing:0.45px;">Tercedes</div>
<div class="t" style="left:414px;top:400px;font-size:12px;font-weight:normal;color:#000;letter-spacing:0.45px;">Stutgart</div>
<div class="t" style="left:494px;top:400px;font-size:12px;font-weight:normal;color:#3d35a8;letter-spacing:0.45px;">www.tercedes.com</div>
<div class="t" style="left:655px;top:400px;font-size:12px;font-weight:normal;color:#000;letter-spacing:0.45px;">+49 12 234 4334</div>
<div class="t" style="left:821px;top:400px;font-size:12px;font-weight:normal;color:#000;letter-spacing:0.45px;">Karel</div>
<div class="t" style="left:903px;top:400px;font-size:12px;letter-spacing:0.6px;color:#3d35a8;white-space:nowrap">uredi | briši</div>
<div style="position:absolute;left:208px;top:425px;width:13px;height:12px;background:#fff;border-top:2px solid #464646;border-left:2px solid #464646;border-right:1px solid #d4d0c8;border-bottom:1px solid #d4d0c8;box-sizing:border-box"></div>
<div class="t" style="left:232px;top:421px;font-size:12px;font-weight:normal;color:#3d35a8;letter-spacing:0.45px;">Kovinoman d.o.o.</div>
<div class="t" style="left:414px;top:421px;font-size:12px;font-weight:normal;color:#000;letter-spacing:0.45px;">Ljubljana</div>
<div class="t" style="left:494px;top:421px;font-size:12px;font-weight:normal;color:#3d35a8;letter-spacing:0.45px;">www.kovinoman.si</div>
<div class="t" style="left:655px;top:421px;font-size:12px;font-weight:normal;color:#000;letter-spacing:0.45px;">01 560 9900</div>
<div class="t" style="left:821px;top:421px;font-size:12px;font-weight:normal;color:#000;letter-spacing:0.45px;">Janja</div>
<div class="t" style="left:903px;top:421px;font-size:12px;letter-spacing:0.6px;color:#3d35a8;white-space:nowrap">uredi | briši</div>
<div style="position:absolute;left:208px;top:446px;width:13px;height:12px;background:#fff;border-top:2px solid #464646;border-left:2px solid #464646;border-right:1px solid #d4d0c8;border-bottom:1px solid #d4d0c8;box-sizing:border-box"></div>
<div class="t" style="left:232px;top:442px;font-size:12px;font-weight:normal;color:#3d35a8;letter-spacing:0.45px;">Vrtalec d.o.o.</div>
<div class="t" style="left:414px;top:442px;font-size:12px;font-weight:normal;color:#000;letter-spacing:0.45px;">Ljubljana</div>
<div class="t" style="left:494px;top:442px;font-size:12px;font-weight:normal;color:#3d35a8;letter-spacing:0.45px;">www.vrtalec.si</div>
<div class="t" style="left:655px;top:442px;font-size:12px;font-weight:normal;color:#000;letter-spacing:0.45px;">01 390 900</div>
<div class="t" style="left:821px;top:442px;font-size:12px;font-weight:normal;color:#000;letter-spacing:0.45px;">Janja</div>
<div class="t" style="left:903px;top:442px;font-size:12px;letter-spacing:0.6px;color:#3d35a8;white-space:nowrap">uredi | briši</div>
<div style="position:absolute;left:208px;top:467px;width:13px;height:12px;background:#fff;border-top:2px solid #464646;border-left:2px solid #464646;border-right:1px solid #d4d0c8;border-bottom:1px solid #d4d0c8;box-sizing:border-box"></div>
<div class="t" style="left:232px;top:463px;font-size:12px;font-weight:normal;color:#3d35a8;letter-spacing:0.45px;">Galvex d.o.o.</div>
<div class="t" style="left:414px;top:463px;font-size:12px;font-weight:normal;color:#000;letter-spacing:0.45px;">Maribor</div>
<div class="t" style="left:494px;top:463px;font-size:12px;font-weight:normal;color:#3d35a8;letter-spacing:0.45px;">www.tehnokov.si</div>
<div class="t" style="left:655px;top:463px;font-size:12px;font-weight:normal;color:#000;letter-spacing:0.45px;">02 670 90 10</div>
<div class="t" style="left:821px;top:463px;font-size:12px;font-weight:normal;color:#000;letter-spacing:0.45px;">Janja</div>
<div class="t" style="left:903px;top:463px;font-size:12px;letter-spacing:0.6px;color:#3d35a8;white-space:nowrap">uredi | briši</div>
<div style="position:absolute;left:208px;top:488px;width:13px;height:12px;background:#fff;border-top:2px solid #464646;border-left:2px solid #464646;border-right:1px solid #d4d0c8;border-bottom:1px solid #d4d0c8;box-sizing:border-box"></div>
<div class="t" style="left:232px;top:484px;font-size:12px;font-weight:normal;color:#3d35a8;letter-spacing:0.45px;">Econogas d.o.o.</div>
<div class="t" style="left:414px;top:484px;font-size:12px;font-weight:normal;color:#000;letter-spacing:0.45px;">Maribor</div>
<div class="t" style="left:494px;top:484px;font-size:12px;font-weight:normal;color:#3d35a8;letter-spacing:0.45px;">www.econogas.si</div>
<div class="t" style="left:655px;top:484px;font-size:12px;font-weight:normal;color:#000;letter-spacing:0.45px;">02 450 508</div>
<div class="t" style="left:821px;top:484px;font-size:12px;font-weight:normal;color:#000;letter-spacing:0.45px;">admin</div>
<div class="t" style="left:903px;top:484px;font-size:12px;letter-spacing:0.6px;color:#3d35a8;white-space:nowrap">uredi | briši</div>
<div style="position:absolute;left:208px;top:509px;width:13px;height:12px;background:#fff;border-top:2px solid #464646;border-left:2px solid #464646;border-right:1px solid #d4d0c8;border-bottom:1px solid #d4d0c8;box-sizing:border-box"></div>
<div class="t" style="left:232px;top:505px;font-size:12px;font-weight:normal;color:#3d35a8;letter-spacing:0.45px;">Malgrad d.o.o.</div>
<div class="t" style="left:414px;top:505px;font-size:12px;font-weight:normal;color:#000;letter-spacing:0.45px;">Koper</div>
<div class="t" style="left:494px;top:505px;font-size:12px;font-weight:normal;color:#3d35a8;letter-spacing:0.45px;">www.malgrad.si</div>
<div class="t" style="left:655px;top:505px;font-size:12px;font-weight:normal;color:#000;letter-spacing:0.45px;">06 70800 20</div>
<div class="t" style="left:821px;top:505px;font-size:12px;font-weight:normal;color:#000;letter-spacing:0.45px;">Marko</div>
<div class="t" style="left:903px;top:505px;font-size:12px;letter-spacing:0.6px;color:#3d35a8;white-space:nowrap">uredi | briši</div>
<div style="position:absolute;left:208px;top:530px;width:13px;height:12px;background:#fff;border-top:2px solid #464646;border-left:2px solid #464646;border-right:1px solid #d4d0c8;border-bottom:1px solid #d4d0c8;box-sizing:border-box"></div>
<div class="t" style="left:232px;top:526px;font-size:12px;font-weight:normal;color:#3d35a8;letter-spacing:0.45px;">Osnova d.o.o.</div>
<div class="t" style="left:414px;top:526px;font-size:12px;font-weight:normal;color:#000;letter-spacing:0.45px;">Kranj</div>
<div class="t" style="left:494px;top:526px;font-size:12px;font-weight:normal;color:#3d35a8;letter-spacing:0.45px;">www.osnova.si</div>
<div class="t" style="left:655px;top:526px;font-size:12px;font-weight:normal;color:#000;letter-spacing:0.45px;">04 670 90 90</div>
<div class="t" style="left:821px;top:526px;font-size:12px;font-weight:normal;color:#000;letter-spacing:0.45px;">Marko</div>
<div class="t" style="left:903px;top:526px;font-size:12px;letter-spacing:0.6px;color:#3d35a8;white-space:nowrap">uredi | briši</div>
<div style="position:absolute;left:208px;top:551px;width:13px;height:12px;background:#fff;border-top:2px solid #464646;border-left:2px solid #464646;border-right:1px solid #d4d0c8;border-bottom:1px solid #d4d0c8;box-sizing:border-box"></div>
<div class="t" style="left:232px;top:547px;font-size:12px;font-weight:normal;color:#3d35a8;letter-spacing:0.45px;">Helas d.o.o.</div>
<div class="t" style="left:414px;top:547px;font-size:12px;font-weight:normal;color:#000;letter-spacing:0.45px;">Ljubljana</div>
<div class="t" style="left:494px;top:547px;font-size:12px;font-weight:normal;color:#3d35a8;letter-spacing:0.45px;">www.helas.si</div>
<div class="t" style="left:655px;top:547px;font-size:12px;font-weight:normal;color:#000;letter-spacing:0.45px;">01 345 555</div>
<div class="t" style="left:821px;top:547px;font-size:12px;font-weight:normal;color:#000;letter-spacing:0.45px;">Marko</div>
<div class="t" style="left:903px;top:547px;font-size:12px;letter-spacing:0.6px;color:#3d35a8;white-space:nowrap">uredi | briši</div>
<div style="position:absolute;left:208px;top:572px;width:13px;height:12px;background:#fff;border-top:2px solid #464646;border-left:2px solid #464646;border-right:1px solid #d4d0c8;border-bottom:1px solid #d4d0c8;box-sizing:border-box"></div>
<div class="t" style="left:232px;top:568px;font-size:12px;font-weight:normal;color:#3d35a8;letter-spacing:0.45px;">Termoran d.o.o.</div>
<div class="t" style="left:414px;top:568px;font-size:12px;font-weight:normal;color:#000;letter-spacing:0.45px;">Brežice</div>
<div class="t" style="left:494px;top:568px;font-size:12px;font-weight:normal;color:#3d35a8;letter-spacing:0.45px;">www.termoran.si</div>
<div class="t" style="left:655px;top:568px;font-size:12px;font-weight:normal;color:#000;letter-spacing:0.45px;">01 318 18 29</div>
<div class="t" style="left:821px;top:568px;font-size:12px;font-weight:normal;color:#000;letter-spacing:0.45px;">Janja</div>
<div class="t" style="left:903px;top:568px;font-size:12px;letter-spacing:0.6px;color:#3d35a8;white-space:nowrap">uredi | briši</div>
<div style="position:absolute;left:208px;top:593px;width:13px;height:12px;background:#fff;border-top:2px solid #464646;border-left:2px solid #464646;border-right:1px solid #d4d0c8;border-bottom:1px solid #d4d0c8;box-sizing:border-box"></div>
<div class="t" style="left:232px;top:589px;font-size:12px;font-weight:normal;color:#3d35a8;letter-spacing:0.45px;">Megaplast d.o.o.</div>
<div class="t" style="left:414px;top:589px;font-size:12px;font-weight:normal;color:#000;letter-spacing:0.45px;">Kamnik</div>
<div class="t" style="left:494px;top:589px;font-size:12px;font-weight:normal;color:#3d35a8;letter-spacing:0.45px;">www.megaplast.si</div>
<div class="t" style="left:655px;top:589px;font-size:12px;font-weight:normal;color:#000;letter-spacing:0.45px;">01 823 45 22</div>
<div class="t" style="left:821px;top:589px;font-size:12px;font-weight:normal;color:#000;letter-spacing:0.45px;">Marko</div>
<div class="t" style="left:903px;top:589px;font-size:12px;letter-spacing:0.6px;color:#3d35a8;white-space:nowrap">uredi | briši</div>
<div style="position:absolute;left:208px;top:614px;width:13px;height:12px;background:#fff;border-top:2px solid #464646;border-left:2px solid #464646;border-right:1px solid #d4d0c8;border-bottom:1px solid #d4d0c8;box-sizing:border-box"></div>
<div class="t" style="left:232px;top:610px;font-size:12px;font-weight:normal;color:#3d35a8;letter-spacing:0.45px;">Plazman d.o.o.</div>
<div class="t" style="left:414px;top:610px;font-size:12px;font-weight:normal;color:#000;letter-spacing:0.45px;">Ljubljana</div>
<div class="t" style="left:494px;top:610px;font-size:12px;font-weight:normal;color:#3d35a8;letter-spacing:0.45px;">www.plazman.si</div>
<div class="t" style="left:655px;top:610px;font-size:12px;font-weight:normal;color:#000;letter-spacing:0.45px;">01 360 090</div>
<div class="t" style="left:821px;top:610px;font-size:12px;font-weight:normal;color:#000;letter-spacing:0.45px;">Marko</div>
<div class="t" style="left:903px;top:610px;font-size:12px;letter-spacing:0.6px;color:#3d35a8;white-space:nowrap">uredi | briši</div>
<div style="position:absolute;left:208px;top:635px;width:13px;height:12px;background:#fff;border-top:2px solid #464646;border-left:2px solid #464646;border-right:1px solid #d4d0c8;border-bottom:1px solid #d4d0c8;box-sizing:border-box"></div>
<div class="t" style="left:232px;top:631px;font-size:12px;font-weight:normal;color:#3d35a8;letter-spacing:0.45px;">Zidgrad d.o.o.</div>
<div class="t" style="left:414px;top:631px;font-size:12px;font-weight:normal;color:#000;letter-spacing:0.45px;">Brežice</div>
<div class="t" style="left:494px;top:631px;font-size:12px;font-weight:normal;color:#3d35a8;letter-spacing:0.45px;">www.zidgrad.si</div>
<div class="t" style="left:655px;top:631px;font-size:12px;font-weight:normal;color:#000;letter-spacing:0.45px;">08 400 32 33</div>
<div class="t" style="left:821px;top:631px;font-size:12px;font-weight:normal;color:#000;letter-spacing:0.45px;">Janja</div>
<div class="t" style="left:903px;top:631px;font-size:12px;letter-spacing:0.6px;color:#3d35a8;white-space:nowrap">uredi | briši</div>
<div style="position:absolute;left:208px;top:656px;width:13px;height:12px;background:#fff;border-top:2px solid #464646;border-left:2px solid #464646;border-right:1px solid #d4d0c8;border-bottom:1px solid #d4d0c8;box-sizing:border-box"></div>
<div class="t" style="left:232px;top:652px;font-size:12px;font-weight:normal;color:#3d35a8;letter-spacing:0.45px;">Betonbar d.o.o.</div>
<div class="t" style="left:414px;top:652px;font-size:12px;font-weight:normal;color:#000;letter-spacing:0.45px;">Koper</div>
<div class="t" style="left:494px;top:652px;font-size:12px;font-weight:normal;color:#3d35a8;letter-spacing:0.45px;">www.betonbar.si</div>
<div class="t" style="left:655px;top:652px;font-size:12px;font-weight:normal;color:#000;letter-spacing:0.45px;">06 300 67 80</div>
<div class="t" style="left:821px;top:652px;font-size:12px;font-weight:normal;color:#000;letter-spacing:0.45px;">Janja</div>
<div class="t" style="left:903px;top:652px;font-size:12px;letter-spacing:0.6px;color:#3d35a8;white-space:nowrap">uredi | briši</div>
<div style="position:absolute;left:208px;top:677px;width:13px;height:12px;background:#fff;border-top:2px solid #464646;border-left:2px solid #464646;border-right:1px solid #d4d0c8;border-bottom:1px solid #d4d0c8;box-sizing:border-box"></div>
<div class="t" style="left:232px;top:673px;font-size:12px;font-weight:normal;color:#3d35a8;letter-spacing:0.45px;">Stroj plus d.o.o.</div>
<div class="t" style="left:414px;top:673px;font-size:12px;font-weight:normal;color:#000;letter-spacing:0.45px;">Maribor</div>
<div class="t" style="left:494px;top:673px;font-size:12px;font-weight:normal;color:#3d35a8;letter-spacing:0.45px;">www.stroj-plus.si</div>
<div class="t" style="left:655px;top:673px;font-size:12px;font-weight:normal;color:#000;letter-spacing:0.45px;">02 345 55 52</div>
<div class="t" style="left:821px;top:673px;font-size:12px;font-weight:normal;color:#000;letter-spacing:0.45px;">Marko</div>
<div class="t" style="left:903px;top:673px;font-size:12px;letter-spacing:0.6px;color:#3d35a8;white-space:nowrap">uredi | briši</div>
<div style="position:absolute;left:208px;top:698px;width:13px;height:12px;background:#fff;border-top:2px solid #464646;border-left:2px solid #464646;border-right:1px solid #d4d0c8;border-bottom:1px solid #d4d0c8;box-sizing:border-box"></div>
<div class="t" style="left:232px;top:694px;font-size:12px;font-weight:normal;color:#3d35a8;letter-spacing:0.45px;">Megastroj d.o.o.</div>
<div class="t" style="left:414px;top:694px;font-size:12px;font-weight:normal;color:#000;letter-spacing:0.45px;">Ljubljana</div>
<div class="t" style="left:494px;top:694px;font-size:12px;font-weight:normal;color:#3d35a8;letter-spacing:0.45px;">www.megastroj.si</div>
<div class="t" style="left:655px;top:694px;font-size:12px;font-weight:normal;color:#000;letter-spacing:0.45px;">01 2561056</div>
<div class="t" style="left:821px;top:694px;font-size:12px;font-weight:normal;color:#000;letter-spacing:0.45px;">Marko</div>
<div class="t" style="left:903px;top:694px;font-size:12px;letter-spacing:0.6px;color:#3d35a8;white-space:nowrap">uredi | briši</div>
<div style="position:absolute;left:208px;top:719px;width:13px;height:12px;background:#fff;border-top:2px solid #464646;border-left:2px solid #464646;border-right:1px solid #d4d0c8;border-bottom:1px solid #d4d0c8;box-sizing:border-box"></div>
<div class="t" style="left:232px;top:715px;font-size:12px;font-weight:normal;color:#3d35a8;letter-spacing:0.45px;">Lesarstvo Grum d.o.o.</div>
<div class="t" style="left:414px;top:715px;font-size:12px;font-weight:normal;color:#000;letter-spacing:0.45px;"></div>
<div class="t" style="left:494px;top:715px;font-size:12px;font-weight:normal;color:#3d35a8;letter-spacing:0.45px;">www.lesgrum.si</div>
<div class="t" style="left:655px;top:715px;font-size:12px;font-weight:normal;color:#000;letter-spacing:0.45px;">03 428 65 10</div>
<div class="t" style="left:821px;top:715px;font-size:12px;font-weight:normal;color:#000;letter-spacing:0.45px;">Tanja</div>
<div class="t" style="left:903px;top:715px;font-size:12px;letter-spacing:0.6px;color:#3d35a8;white-space:nowrap">uredi | briši</div>
<div class="t" style="left:195px;top:761px;font-size:11px;font-weight:bold;color:#ff4000;letter-spacing:0.7px;">Orodja</div>
<div style="position:absolute;left:195px;top:779px;width:250px;height:1px;background:#000"></div>
<div style="position:absolute;left:195px;top:780px;width:250px;height:80px;border:1px solid #b2c9e6;border-top:none;box-sizing:border-box"></div>
<div style="position:absolute;left:231px;top:796px;width:5px;height:5px;background:#000;border-radius:50%"></div>
<div class="t" style="left:246px;top:788px;font-size:12px;font-weight:normal;color:#3d35a8;letter-spacing:0.4px;">Uvozi Stranke</div>
<div style="position:absolute;left:231px;top:809px;width:5px;height:5px;background:#000;border-radius:50%"></div>
<div class="t" style="left:246px;top:801px;font-size:12px;font-weight:normal;color:#3d35a8;letter-spacing:0.4px;">Izvozi vse Stranke</div>
<div style="position:absolute;left:231px;top:822px;width:5px;height:5px;background:#000;border-radius:50%"></div>
<div class="t" style="left:246px;top:814px;font-size:12px;font-weight:normal;color:#3d35a8;letter-spacing:0.4px;">Izvozi Pregled</div>
<div style="position:absolute;left:356px;top:860px;width:485px;height:42px;border:1px solid #d8d8d8;box-sizing:border-box;background:#fff"></div>
<div class="t" style="left:356px;top:858px;width:485px;text-align:center;font-size:10.5px;letter-spacing:0.5px;color:#000">AtolCRM - © Atol d.o.o.</div>
<div class="t" style="left:356px;top:872px;width:485px;text-align:center;font-size:12px;letter-spacing:0.55px;color:#3d35a8">Pogoji uporabe <span style="color:#000">|</span> Varnost podatkov</div>
<div class="t" style="left:356px;top:885px;width:485px;text-align:center;font-size:10.5px;letter-spacing:0.38px;color:#000">This software is a collective work consisting of Open Source components.</div>
<div style="position:absolute;left:0px;top:0px;width:1px;height:911px;background:#5c5c5c"></div>
<div style="position:absolute;left:0px;top:910px;width:1002px;height:1px;background:#5c5c5c"></div>
<div style="position:absolute;left:1001px;top:0px;width:1px;height:911px;background:#6b6b00"></div>
</body></html>
